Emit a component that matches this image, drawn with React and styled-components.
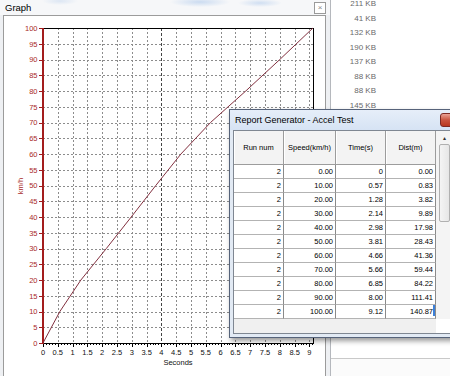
import React from 'react'
import styled, { createGlobalStyle, css } from 'styled-components'

const GlobalStyle = createGlobalStyle`
  html, body {
    margin: 0;
    padding: 0;
    background: #fff;
  }
  body {
    width: 450px;
    height: 376px;
    overflow: hidden;
    font-family: "Liberation Sans", Arial, sans-serif;
  }
`

const runs = [
  { speed: '0.00', time: '0', dist: '0.00' },
  { speed: '10.00', time: '0.57', dist: '0.83' },
  { speed: '20.00', time: '1.28', dist: '3.82' },
  { speed: '30.00', time: '2.14', dist: '9.89' },
  { speed: '40.00', time: '2.98', dist: '17.98' },
  { speed: '50.00', time: '3.81', dist: '28.43' },
  { speed: '60.00', time: '4.66', dist: '41.36' },
  { speed: '70.00', time: '5.66', dist: '59.44' },
  { speed: '80.00', time: '6.85', dist: '84.22' },
  { speed: '90.00', time: '8.00', dist: '111.41' },
  { speed: '100.00', time: '9.12', dist: '140.87' },
]

const sizes = ['211 KB', '41 KB', '132 KB', '190 KB', '137 KB', '88 KB', '88 KB', '145 KB']

// plot geometry, in page pixels
const X0 = 43
const X1 = 313
const Y0 = 343
const Y1 = 28
const px = t => X0 + t * 29.6
const py = v => Y0 - v * 3.15
const crisp = n => Math.round(n) + 0.5

function Chart() {
  const halfSteps = Array.from({ length: 19 }, (_, i) => i * 0.5)
  const fives = Array.from({ length: 21 }, (_, i) => i * 5)
  const minor = Array.from({ length: 92 }, (_, i) => i / 10)
  const curve = runs.map(r => `${px(parseFloat(r.time))},${py(parseFloat(r.speed))}`).join(' ')

  return (
    <svg width="321" height="360" viewBox="4 16 321 360" style={{ display: 'block' }}>
      {fives.slice(1, 20).map(v => (
        <line key={'h' + v} x1={X0} x2={X1} y1={crisp(py(v))} y2={crisp(py(v))}
          stroke="#8c8c8c" strokeDasharray="2 2" />
      ))}
      {halfSteps.slice(1).map(t => (
        <line key={'v' + t} x1={crisp(px(t))} x2={crisp(px(t))} y1={Y1} y2={Y0}
          stroke={t === 4 ? '#444' : '#8c8c8c'} strokeDasharray={t === 4 ? '3 2' : '2 2'} />
      ))}
      <line x1={X0} x2={X1 + 1} y1={Y1 + 0.5} y2={Y1 + 0.5} stroke="#000" />
      <line x1={X1 + 0.5} x2={X1 + 0.5} y1={Y1} y2={Y0} stroke="#000" />

      {minor.map(t => (
        <line key={'m' + t} x1={crisp(px(t))} x2={crisp(px(t))} y1={Y0}
          y2={Y0 + (Math.round(t * 10) % 5 === 0 ? 4 : 2)} stroke="#000" />
      ))}
      <line x1={X0} x2={X1 + 1} y1={Y0 + 0.5} y2={Y0 + 0.5} stroke="#000" />

      {fives.map(v => (
        <line key={'yt' + v} x1={39} x2={X0} y1={crisp(py(v))} y2={crisp(py(v))} stroke="#a31d1d" />
      ))}
      <line x1={X0} x2={X0} y1={Y1} y2={Y0 + 1} stroke="#a31d1d" strokeWidth="2" />

      <g fontFamily="Liberation Sans, Arial, sans-serif" fontSize="7.5">
        {fives.map(v => (
          <text key={'yl' + v} x={37.5} y={py(v) + 2.8} textAnchor="end" fill="#a82a2a">{v}</text>
        ))}
        {halfSteps.map(t => (
          <text key={'xl' + t} x={px(t)} y={355} textAnchor="middle" fill="#111">
            {Number.isInteger(t) ? t : t.toFixed(1)}
          </text>
        ))}
        <text x={178} y={365} textAnchor="middle" fill="#111">Seconds</text>
        <text x={0} y={0} textAnchor="middle" fill="#a82a2a"
          transform="translate(22.5 186) rotate(-90)">km/h</text>
      </g>

      <polyline points={curve} fill="none" stroke="#82303f" strokeWidth="1" />
    </svg>
  )
}

export default function App() {
  return (
    <>
      <GlobalStyle />
      <Desktop>
        <GraphWindow>
          <GraphTitle>
            Graph
            <SmallClose>×</SmallClose>
          </GraphTitle>
          <GraphPanel>
            <Chart />
          </GraphPanel>
        </GraphWindow>

        <FileList>
          <Sizes>
            {sizes.map((s, i) => (
              <Size key={i}>{s}</Size>
            ))}
          </Sizes>
          <StatusStrip />
        </FileList>

        <Dialog>
          <DialogTitle>
            Report Generator - Accel Test
            <CloseButton />
          </DialogTitle>
          <Content>
            <Grid>
              <HeadCell>Run num</HeadCell>
              <HeadCell>Speed(km/h)</HeadCell>
              <HeadCell>Time(s)</HeadCell>
              <HeadCell>Dist(m)</HeadCell>
              {runs.map((r, i) => (
                <React.Fragment key={i}>
                  <Cell>2</Cell>
                  <Cell>{r.speed}</Cell>
                  <Cell>{r.time}</Cell>
                  <Cell $caret={i === runs.length - 1}>{r.dist}</Cell>
                </React.Fragment>
              ))}
            </Grid>
            <VScroll>
              <Arrow>▴</Arrow>
              <VThumb />
            </VScroll>
            <HScroll>
              <Arrow>◂</Arrow>
              <HThumb />
              <Arrow $end>▸</Arrow>
            </HScroll>
            <Corner />
          </Content>
        </Dialog>
      </Desktop>
    </>
  )
}

const Desktop = styled.div`
  position: relative;
  display: flex;
  width: 450px;
  height: 376px;
  overflow: hidden;
`

const GraphWindow = styled.div`
  width: 331px;
  box-sizing: border-box;
  display: flex;
  flex-direction: column;
  padding: 0 4px 0 3px;
  background: #eef0f3;
  border-right: 1px solid #b5b8bd;
`

const GraphTitle = styled.div`
  height: 15px;
  display: flex;
  align-items: center;
  margin: 0 -4px 0 -3px;
  padding: 0 4px 0 5px;
  font-size: 9.5px;
  color: #000;
  background:
    radial-gradient(ellipse 30px 5px at 200px 2px, rgba(150, 185, 230, 0.45), transparent),
    radial-gradient(ellipse 22px 4px at 260px 3px, rgba(150, 185, 230, 0.4), transparent),
    radial-gradient(ellipse 18px 4px at 60px 1px, rgba(160, 190, 230, 0.3), transparent),
    #f6f7f9;
`

const SmallClose = styled.div`
  margin-left: auto;
  width: 10px;
  height: 10px;
  border: 1px solid #9a9a9a;
  background: #fff;
  color: #888;
  font-size: 8px;
  line-height: 9px;
  text-align: center;
`

const GraphPanel = styled.div`
  flex: 1;
  background: #fff;
  border: 1px solid #9b9b9b;
  border-bottom: none;
`

const FileList = styled.div`
  flex: 1;
  display: flex;
  flex-direction: column;
  background: #fff;
`

const Sizes = styled.div`
  width: 45px;
  margin-top: -3px;
`

const Size = styled.div`
  height: 14.5px;
  line-height: 14.5px;
  text-align: right;
  font-size: 8px;
  color: #6a6a6a;
`

const StatusStrip = styled.div`
  margin-top: auto;
  height: 17px;
  border-top: 1px solid #c9c9c9;
  background: #fbfbfb;
`

const Dialog = styled.div`
  position: absolute;
  left: 229px;
  top: 109px;
  width: 258px;
  height: 229px;
  box-sizing: border-box;
  display: flex;
  flex-direction: column;
  border: 1px solid #56637a;
  background: #e2eaf4;
  box-shadow: 2px 3px 5px rgba(0, 0, 0, 0.4);
`

const DialogTitle = styled.div`
  height: 20px;
  display: flex;
  align-items: center;
  padding: 0 4px 0 5px;
  font-size: 9px;
  color: #000;
  background: linear-gradient(#e6eef9, #d6e3f4);
`

const CloseButton = styled.div`
  margin-left: auto;
  width: 40px;
  height: 12px;
  border: 1px solid #7d2a24;
  border-radius: 3px;
  background: linear-gradient(#eaa296, #c9543f 50%, #b9371f);
`

const Content = styled.div`
  margin: 0 3px;
  border: 1px solid #7f8792;
  background: #fff;
  display: grid;
  grid-template-columns: 202px 17px 1fr;
  grid-template-rows: 188px 14px;
`

const Grid = styled.div`
  display: grid;
  grid-template-columns: 50px 52px 50px 50px;
  grid-auto-rows: 14px;
  grid-template-rows: 34px;
  align-content: start;
`

const HeadCell = styled.div`
  display: flex;
  align-items: center;
  justify-content: center;
  box-sizing: border-box;
  background: #f3f3f3;
  border-right: 1px solid #9c9c9c;
  border-bottom: 1px solid #9c9c9c;
  box-shadow: inset 1px 0 #fff;
  font-size: 7.5px;
  color: #000;
`

const Cell = styled.div`
  position: relative;
  box-sizing: border-box;
  border-right: 1px solid #8a8a8a;
  border-bottom: 1px solid #b3b3b3;
  padding-right: 2px;
  text-align: right;
  font-size: 7.5px;
  line-height: 13px;
  color: #000;

  ${p => p.$caret && css`
    &::after {
      content: '';
      position: absolute;
      right: 0;
      top: 0;
      bottom: 2px;
      width: 2px;
      background: #3d7fd8;
    }
  `}
`

const VScroll = styled.div`
  display: flex;
  flex-direction: column;
  align-items: center;
  background: #f4f4f4;
`

const VThumb = styled.div`
  width: 11px;
  height: 78px;
  margin-top: 2px;
  box-sizing: border-box;
  border: 1px solid #b0b0b0;
  border-radius: 2px;
  background: linear-gradient(90deg, #f4f4f4, #e6e6e6);
`

const HScroll = styled.div`
  display: flex;
  align-items: center;
  padding: 0 2px 0 4px;
  background: #f0f0f0;
`

const HThumb = styled.div`
  width: 10px;
  height: 10px;
  margin-left: 3px;
  box-sizing: border-box;
  border: 1px solid #a3a3a3;
  border-radius: 2px;
  background: linear-gradient(#f3f3f3, #dfdfdf);
`

const Arrow = styled.span`
  font-size: 6px;
  line-height: 8px;
  color: #333;
  margin-top: 3px;
  ${p => p.$end && css`
    margin-left: auto;
  `}
`

const Corner = styled.div`
  background: #f0f0f0;
`
